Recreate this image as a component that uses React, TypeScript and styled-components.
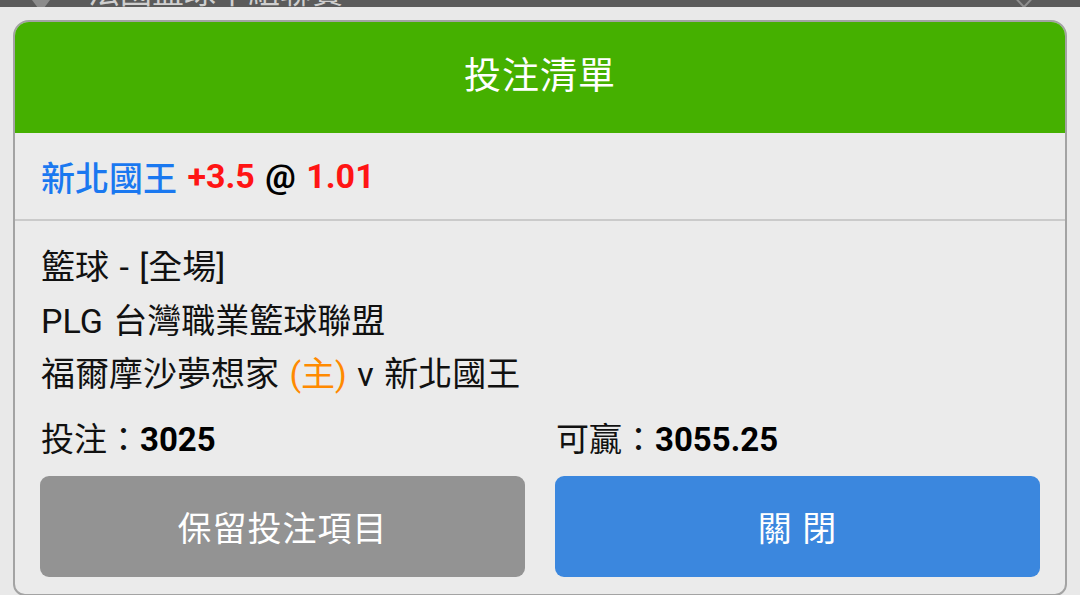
import React from 'react';
import styled, { createGlobalStyle } from 'styled-components';

const GlobalStyle = createGlobalStyle`
  html, body {
    margin: 0;
    padding: 0;
    background: #e9e9e9;
  }
  body {
    font-family: Roboto, 'Noto Sans CJK TC', sans-serif;
  }
`;

const Page = styled.div`
  width: 1080px;
  height: 595px;
  overflow: hidden;
  background: #e9e9e9;
`;

const TopBar = styled.div`
  position: relative;
  height: 7px;
  overflow: hidden;
  background: #5b5b5b;
  display: flex;
  align-items: flex-start;
`;

const BackArrow = styled.div`
  width: 0;
  height: 0;
  margin: -12px 0 0 23px;
  border-left: 18px solid transparent;
  border-right: 18px solid transparent;
  border-top: 24px solid #8c8c8c;
`;

const TopTitle = styled.div`
  margin: -27px 0 0 29px;
  font-size: 32px;
  line-height: 32px;
  color: #cfcfcf;
  font-family: 'Noto Sans CJK TC', sans-serif;
  white-space: nowrap;
`;

const Chevron = styled.svg`
  margin-left: auto;
  margin-right: 38px;
`;

const Card = styled.div`
  margin: 13px 13px 0 13px;
  height: 576px;
  box-sizing: border-box;
  border: 2px solid #a3a3a3;
  border-radius: 16px 16px 12px 12px;
  background: #ebebeb;
  overflow: hidden;
  display: flex;
  flex-direction: column;
`;

const Header = styled.div`
  height: 113px;
  box-sizing: border-box;
  padding-bottom: 8px;
  margin: -2px -2px 0 -2px;
  border-radius: 16px 16px 0 0;
  background: #45b000;
  color: #ffffff;
  font-size: 37px;
  display: flex;
  align-items: center;
  justify-content: center;
  letter-spacing: 1px;
`;

const BetRow = styled.div`
  height: 86px;
  border-bottom: 2px solid #cacaca;
  padding: 0 26px;
  display: flex;
  align-items: center;
  font-size: 34px;
  font-weight: 500;
  white-space: pre;
  word-spacing: 2px;
`;

const Span = styled.span<{ $color: string; $bold?: boolean }>`
  color: ${(p) => p.$color};
  font-weight: ${(p) => (p.$bold ? 700 : 500)};
`;

const Details = styled.div`
  padding: 20px 26px 0 26px;
  font-size: 34px;
  line-height: 53.5px;
  color: #111111;
  word-spacing: 2px;
`;

const Home = styled.span`
  color: #ff8a00;
`;

const Grid = styled.div`
  display: grid;
  grid-template-columns: 1fr 1fr;
  column-gap: 30px;
  padding: 0 25px;
`;

const Amount = styled.div`
  margin-top: 11px;
  font-size: 33px;
  line-height: 53.5px;
  color: #111111;
  padding-left: 1px;

  b {
    font-weight: 700;
    color: #000;
  }
`;

const Button = styled.div<{ $variant: 'grey' | 'blue' }>`
  margin-top: 10px;
  height: 101px;
  border-radius: 9px;
  background: ${(p) => (p.$variant === 'blue' ? '#3b87de' : '#939393')};
  color: #ffffff;
  font-size: 34px;
  display: flex;
  align-items: center;
  justify-content: center;
  letter-spacing: 1px;
  white-space: pre;
`;

export default function App() {
  return (
    <Page>
      <GlobalStyle />
      <TopBar>
        <BackArrow />
        <TopTitle>法國籃球甲組聯賽</TopTitle>
        <Chevron width="36" height="7" viewBox="0 0 36 7">
          <path d="M2 -10 L18 7 L34 -10" stroke="#8e8e8e" strokeWidth="2" fill="none" />
        </Chevron>
      </TopBar>
      <Card>
        <Header>投注清單</Header>
        <BetRow>
          <Span $color="#1a78f0">新北國王 </Span>
          <Span $color="#ff1414" $bold>+3.5 </Span>
          <Span $color="#000000" $bold>@ </Span>
          <Span $color="#ff1414" $bold>1.01</Span>
        </BetRow>
        <Details>
          <div>籃球 - [全場]</div>
          <div>PLG 台灣職業籃球聯盟</div>
          <div>
            福爾摩沙夢想家 <Home>(主)</Home> v 新北國王
          </div>
        </Details>
        <Grid>
          <Amount>
            投注：<b>3025</b>
          </Amount>
          <Amount>
            可贏：<b>3055.25</b>
          </Amount>
          <Button $variant="grey">保留投注項目</Button>
          <Button $variant="blue">關 閉</Button>
        </Grid>
      </Card>
    </Page>
  );
}
